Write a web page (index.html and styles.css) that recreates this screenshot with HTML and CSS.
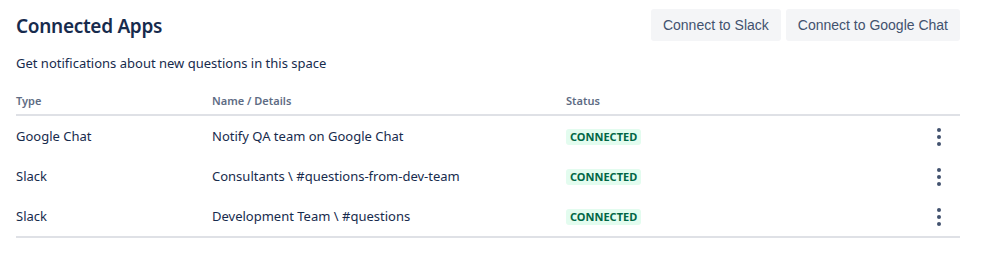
FILE: index.html
```html
<!DOCTYPE html>
<html lang="en">
<head>
    <meta charset="UTF-8">
    <title>Connected Apps</title>
    <link rel="stylesheet" href="styles.css">
</head>
<body>
    <div class="apps-page">
        <div class="page-header">
            <h1>Connected Apps</h1>
            <div class="actions">
                <button class="btn">Connect to Slack</button>
                <button class="btn">Connect to Google Chat</button>
            </div>
        </div>
        <p class="intro">Get notifications about new questions in this space</p>

        <table class="apps-table">
            <thead>
                <tr>
                    <th class="col-type">Type</th>
                    <th class="col-name">Name / Details</th>
                    <th class="col-status">Status</th>
                    <th class="col-menu"></th>
                </tr>
            </thead>
            <tbody>
                <tr>
                    <td>Google Chat</td>
                    <td>Notify QA team on Google Chat</td>
                    <td><span class="lozenge">Connected</span></td>
                    <td class="menu-cell"><span class="kebab"><i></i><i></i><i></i></span></td>
                </tr>
                <tr>
                    <td>Slack</td>
                    <td>Consultants \ #questions-from-dev-team</td>
                    <td><span class="lozenge">Connected</span></td>
                    <td class="menu-cell"><span class="kebab"><i></i><i></i><i></i></span></td>
                </tr>
                <tr>
                    <td>Slack</td>
                    <td>Development Team \ #questions</td>
                    <td><span class="lozenge">Connected</span></td>
                    <td class="menu-cell"><span class="kebab"><i></i><i></i><i></i></span></td>
                </tr>
            </tbody>
        </table>
    </div>
</body>
</html>
```

FILE: styles.css
```css
body {
    margin: 0;
    font-family: "Segoe UI", "Noto Sans", sans-serif;
    color: #172b4d;
    background: #fff;
}

.apps-page {
    width: 944px;
    padding: 9px 16px 0 16px;
}

/* Header */
.page-header {
    display: flex;
    justify-content: space-between;
    align-items: flex-start;
}

h1 {
    margin: 3px 0 0 0;
    font-size: 19px;
    font-weight: 600;
    letter-spacing: -0.3px;
    line-height: 28px;
    color: #172b4d;
}

.actions {
    display: flex;
    gap: 5px;
}

.btn {
    height: 32px;
    padding: 0 12px;
    border: none;
    border-radius: 3px;
    background: #f4f5f7;
    color: #42526e;
    font-family: "Liberation Sans", Arial, sans-serif;
    font-size: 14px;
    cursor: pointer;
}

.intro {
    margin: 12px 0 0 0;
    font-size: 13px;
    line-height: 20px;
}

/* Table */
.apps-table {
    width: 100%;
    margin-top: 19px;
    border-collapse: collapse;
    border-bottom: 2px solid #dfe1e6;
}

.apps-table th {
    text-align: left;
    font-size: 11px;
    font-weight: 600;
    color: #5e6c84;
    padding: 0 0 6px 0;
    height: 16px;
    border-bottom: 2px solid #dfe1e6;
}

.apps-table td {
    height: 40px;
    padding: 0;
    font-size: 13px;
}

.col-type { width: 196px; }
.col-name { width: 354px; }
.col-menu { width: 30px; }

.lozenge {
    display: inline-block;
    padding: 0 4px;
    border-radius: 3px;
    background: #e3fcef;
    color: #006644;
    font-size: 11px;
    font-weight: 700;
    line-height: 16px;
    text-transform: uppercase;
}

.menu-cell {
    text-align: left;
}

.kebab {
    display: inline-flex;
    flex-direction: column;
    gap: 3px;
    margin-left: 7px;
    vertical-align: middle;
}

.kebab i {
    display: block;
    width: 4px;
    height: 4px;
    border-radius: 50%;
    background: #42526e;
}
```
